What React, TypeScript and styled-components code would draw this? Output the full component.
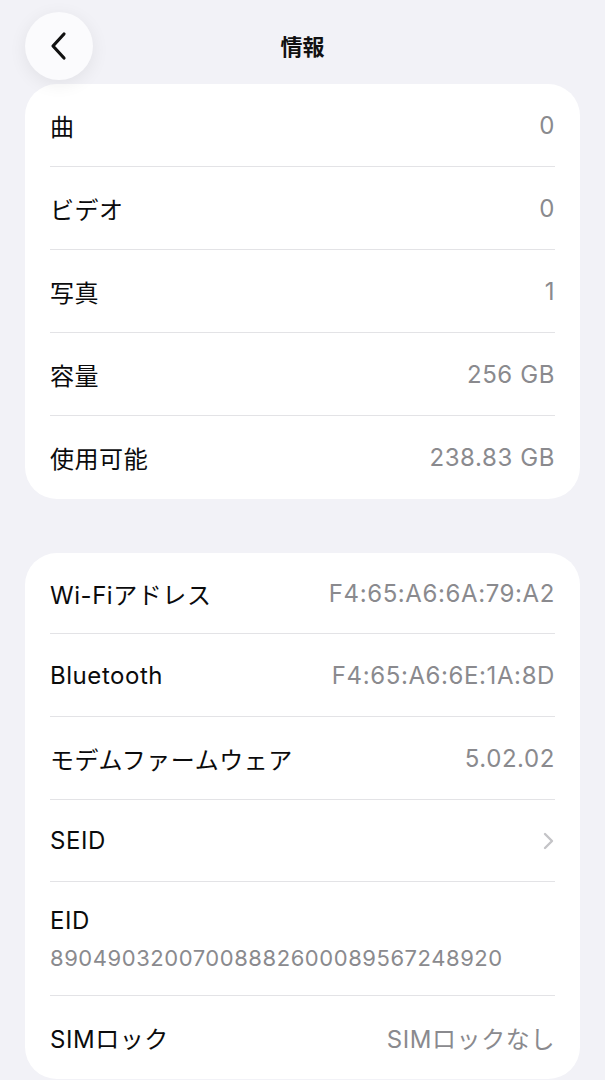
import styled, { createGlobalStyle } from "styled-components";

const GlobalStyle = createGlobalStyle`
  html, body {
    margin: 0;
    padding: 0;
    background: #f2f2f7;
  }
  body {
    font-family: Inter, "Noto Sans CJK JP", sans-serif;
    -webkit-font-smoothing: antialiased;
  }
`;

const Page = styled.div`
  width: 605px;
  height: 1080px;
  overflow: hidden;
  background: #f2f2f7;
`;

const NavBar = styled.div`
  position: relative;
  height: 84px;
  display: flex;
  align-items: flex-start;
  justify-content: center;
`;

const BackButton = styled.button`
  position: absolute;
  left: 25px;
  top: 12px;
  width: 68px;
  height: 68px;
  border: none;
  border-radius: 50%;
  background: #fbfbfd;
  box-shadow: 0 4px 18px rgba(0, 0, 0, 0.07);
  display: flex;
  align-items: center;
  justify-content: center;
  padding: 0;
`;

const Title = styled.h1`
  margin: 0;
  padding-top: 31px;
  font-size: 22px;
  line-height: 32px;
  font-weight: 700;
  color: #111;
`;

const Card = styled.div<{ $gap?: number }>`
  margin: ${(p) => p.$gap ?? 0}px 25px 0 25px;
  background: #fff;
  border-radius: 32px;
  padding: 0 25px;
`;

const Row = styled.div<{ $height?: number }>`
  height: ${(p) => p.$height ?? 83}px;
  display: flex;
  align-items: center;
  justify-content: space-between;
  border-bottom: 1.5px solid #e3e3e6;
  box-sizing: border-box;
  &:last-child {
    border-bottom: none;
  }
`;

const StackRow = styled(Row)`
  flex-direction: column;
  align-items: flex-start;
  justify-content: flex-start;
  padding-top: 24px;
`;

const Label = styled.span`
  font-size: 24px;
  color: #0b0b0c;
  letter-spacing: 0.55px;
`;

const Value = styled.span`
  font-size: 24px;
  color: #8a8a8e;
  letter-spacing: 0.6px;
`;

const SubValue = styled(Value)`
  margin-top: 10px;
  font-size: 22px;
  letter-spacing: 0.55px;
`;

const Chevron = () => (
  <svg width="14" height="20" viewBox="0 0 14 20">
    <path d="M4 3 L11 10 L4 17" fill="none" stroke="#c4c4c7" strokeWidth="2.4" strokeLinecap="round" strokeLinejoin="round" />
  </svg>
);

const BackIcon = () => (
  <svg width="24" height="32" viewBox="0 0 24 32">
    <path d="M17 4 L6 16 L17 28" fill="none" stroke="#111" strokeWidth="3.2" strokeLinecap="round" strokeLinejoin="round" />
  </svg>
);

const media = [
  ["曲", "0"],
  ["ビデオ", "0"],
  ["写真", "1"],
  ["容量", "256 GB"],
  ["使用可能", "238.83 GB"],
];

export default function App() {
  return (
    <Page>
      <GlobalStyle />
      <NavBar>
        <BackButton aria-label="戻る">
          <BackIcon />
        </BackButton>
        <Title>情報</Title>
      </NavBar>

      <Card>
        {media.map(([label, value]) => (
          <Row key={label}>
            <Label>{label}</Label>
            <Value>{value}</Value>
          </Row>
        ))}
      </Card>

      <Card $gap={54}>
        <Row $height={81}>
          <Label>Wi-Fiアドレス</Label>
          <Value>F4:65:A6:6A:79:A2</Value>
        </Row>
        <Row>
          <Label>Bluetooth</Label>
          <Value>F4:65:A6:6E:1A:8D</Value>
        </Row>
        <Row>
          <Label>モデムファームウェア</Label>
          <Value>5.02.02</Value>
        </Row>
        <Row $height={82}>
          <Label>SEID</Label>
          <Chevron />
        </Row>
        <StackRow $height={114}>
          <Label>EID</Label>
          <SubValue>89049032007008882600089567248920</SubValue>
        </StackRow>
        <Row>
          <Label>SIMロック</Label>
          <Value>SIMロックなし</Value>
        </Row>
      </Card>
    </Page>
  );
}
